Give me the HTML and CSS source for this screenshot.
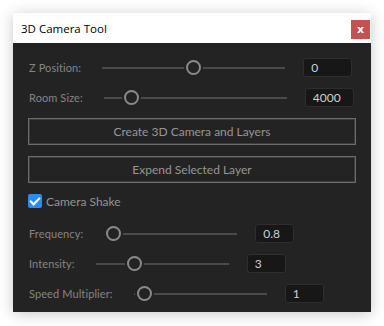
FILE: index.html
```html
<!DOCTYPE html>
<html lang="en">
<head>
    <meta charset="UTF-8">
    <meta name="viewport" content="width=device-width, initial-scale=1.0">
    <title>3D Camera Tool</title>
    <link rel="stylesheet" href="styles.css">
</head>
<body>

    <div class="window">
        <div class="titlebar">
            <span class="title">3D Camera Tool</span>
            <button class="close">x</button>
        </div>

        <div class="panel">
            <!-- Camera setup -->
            <div class="row wide">
                <label>Z Position:</label>
                <input type="range" min="-1000" max="1000" value="0">
                <input type="text" class="value" value="0">
            </div>
            <div class="row wide">
                <label>Room Size:</label>
                <input type="range" min="500" max="30000" value="4000">
                <input type="text" class="value" value="4000">
            </div>

            <button class="action">Create 3D Camera and Layers</button>
            <button class="action">Expend Selected Layer</button>

            <label class="check">
                <input type="checkbox" checked>
                <span>Camera Shake</span>
            </label>

            <!-- Shake settings -->
            <div class="row narrow shake">
                <label>Frequency:</label>
                <input type="range" min="0.5" max="20" step="0.1" value="0.8">
                <input type="text" class="value" value="0.8">
            </div>
            <div class="row narrow">
                <label>Intensity:</label>
                <input type="range" min="0.5" max="10" step="0.1" value="3">
                <input type="text" class="value" value="3">
            </div>
            <div class="row narrow">
                <label>Speed Multiplier:</label>
                <input type="range" min="0.5" max="20" step="0.1" value="1">
                <input type="text" class="value" value="1">
            </div>
        </div>
    </div>

</body>
</html>
```

FILE: styles.css
```css
* {
    margin: 0;
    padding: 0;
    box-sizing: border-box;
}

body {
    background: #fff;
    font-family: "Lato", "Open Sans", sans-serif;
}

.window {
    margin: 13px;
    width: 358px;
    background: #232323;
    box-shadow: 0 2px 14px rgba(0, 0, 0, 0.22);
}

/* Title bar */
.titlebar {
    height: 30px;
    background: #fff;
    display: flex;
    align-items: center;
    justify-content: space-between;
    padding-left: 8px;
}

.title {
    font-family: "Open Sans", sans-serif;
    font-size: 11.5px;
    color: #000;
}

.close {
    width: 19px;
    height: 19px;
    margin: 2px 1px 0 0;
    border: none;
    background: #c75050;
    color: #fff;
    font-family: "DejaVu Sans", sans-serif;
    font-weight: bold;
    font-size: 11px;
    line-height: 17px;
}

/* Panel */
.panel {
    display: flex;
    flex-direction: column;
    gap: 11px;
    padding: 15px 15px 9px;
}

.row {
    display: flex;
    align-items: center;
    height: 19px;
    padding-left: 1px;
}

.row label {
    flex-shrink: 0;
    white-space: nowrap;
    font-size: 11px;
    letter-spacing: 0.1px;
    color: #858585;
    margin-right: 21px;
}

.row.shake {
    margin-top: 5px;
}

/* Sliders */
input[type="range"] {
    -webkit-appearance: none;
    appearance: none;
    flex-shrink: 0;
    background: transparent;
    height: 16px;
    margin-right: 18px;
}

.wide input[type="range"] { width: 183px; }
.narrow input[type="range"] { width: 133px; }

input[type="range"]::-webkit-slider-runnable-track {
    height: 2px;
    background: #4a4a4a;
}

input[type="range"]::-webkit-slider-thumb {
    -webkit-appearance: none;
    box-sizing: border-box;
    width: 15px;
    height: 15px;
    margin-top: -6.5px;
    border: 2px solid #8a8a8a;
    border-radius: 50%;
    background: #232323;
    box-shadow: 0 0 0 2px #232323;
}

/* Value boxes */
.value {
    flex-shrink: 0;
    height: 19px;
    background: #171717;
    border: 1px solid #2e2e2e;
    border-radius: 3px;
    color: #cfcfcf;
    font-family: "Lato", sans-serif;
    font-size: 12px;
    padding: 0 7px;
    outline: none;
}

.wide .value { width: 49px; }
.narrow .value { width: 39px; }

/* Buttons */
.action {
    height: 27px;
    background: #232323;
    border: 1px solid #6c6c6c;
    box-shadow: inset 0 0 0 1px #3c3c3c;
    color: #969696;
    font-family: "Lato", sans-serif;
    font-size: 12px;
}

/* Checkbox */
.check {
    display: flex;
    align-items: center;
    height: 14px;
    gap: 4px;
    font-size: 12px;
    color: #939393;
}

.check input {
    -webkit-appearance: none;
    appearance: none;
    position: relative;
    width: 14px;
    height: 14px;
    border-radius: 2px;
    background: #2d8ceb;
}

.check input:checked::after {
    content: "";
    position: absolute;
    left: 4px;
    top: 1px;
    width: 4px;
    height: 8px;
    border: solid #fff;
    border-width: 0 2px 2px 0;
    transform: rotate(45deg);
}
```
